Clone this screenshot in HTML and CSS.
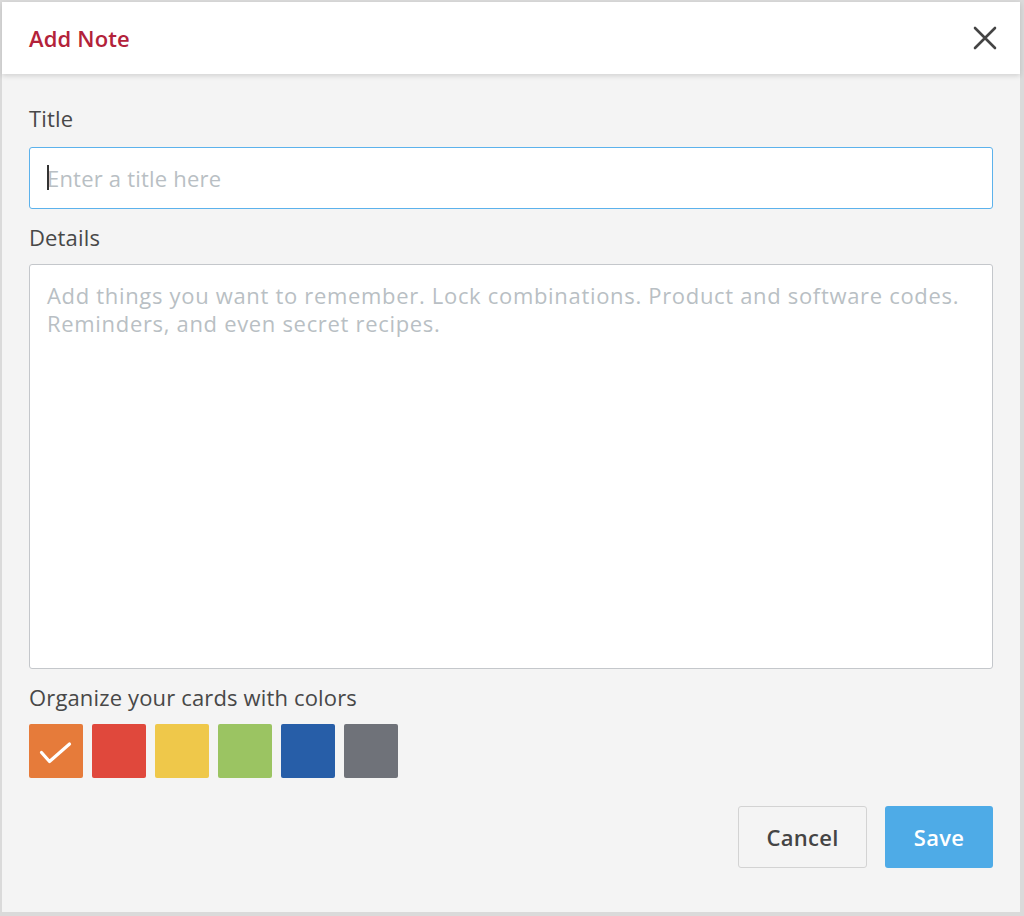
FILE: index.html
```html
<!DOCTYPE html>
<html lang="en">
<head>
<meta charset="utf-8">
<title>Add Note</title>
<link rel="stylesheet" href="styles.css">
</head>
<body>
<div class="modal">
  <header class="modal-header">
    <h1 class="modal-title">Add Note</h1>
    <button class="close-btn" aria-label="Close">
      <svg width="24" height="24" viewBox="0 0 24 24"><path d="M2 2 L22 22 M22 2 L2 22" stroke="#444" stroke-width="2.6" stroke-linecap="round" fill="none"/></svg>
    </button>
  </header>
  <div class="modal-body">
    <label class="field-label" for="title">Title</label>
    <div class="input-wrap">
      <input id="title" class="text-input" type="text" placeholder="Enter a title here">
      <span class="caret"></span>
    </div>
    <label class="field-label" for="details">Details</label>
    <textarea id="details" class="text-area" placeholder="Add things you want to remember. Lock combinations. Product and software codes. Reminders, and even secret recipes."></textarea>
    <div class="field-label">Organize your cards with colors</div>
    <div class="swatches">
      <div class="swatch orange selected">
        <svg width="54" height="54" viewBox="0 0 54 54"><path d="M12.5 28.5 L20.5 37.5 L40.5 20" stroke="#fff" stroke-width="3.2" stroke-linecap="round" stroke-linejoin="round" fill="none"/></svg>
      </div>
      <div class="swatch red"></div>
      <div class="swatch yellow"></div>
      <div class="swatch green"></div>
      <div class="swatch blue"></div>
      <div class="swatch gray"></div>
    </div>
    <div class="actions">
      <button class="btn btn-cancel">Cancel</button>
      <button class="btn btn-save">Save</button>
    </div>
  </div>
</div>
</body>
</html>
```

FILE: styles.css
```css
html, body {
  margin: 0;
  padding: 0;
}
body {
  background: #dadada;
  font-family: "Open Sans", "Noto Sans", sans-serif;
  width: 1024px;
  height: 916px;
  overflow: hidden;
}
.modal {
  margin: 2px 4px 0 2px;
  height: 910px;
  background: #f4f4f4;
  display: flex;
  flex-direction: column;
}
.modal-header {
  position: relative;
  z-index: 1;
  height: 72px;
  background: #fff;
  display: flex;
  align-items: center;
  justify-content: space-between;
  padding: 0 23px 0 27px;
  box-shadow: 0 2px 5px rgba(0, 0, 0, 0.14);
}
.modal-title {
  margin: 0;
  font-size: 22px;
  letter-spacing: 0.15px;
  font-weight: 600;
  color: #b3223a;
}
.close-btn {
  background: none;
  border: 0;
  padding: 0;
  width: 24px;
  height: 24px;
  cursor: pointer;
  display: flex;
}
.modal-body {
  padding: 30px 27px 0 27px;
  display: flex;
  flex-direction: column;
}
.field-label {
  display: block;
  font-size: 22px;
  letter-spacing: 0.15px;
  line-height: 28px;
  color: #484848;
}
.input-wrap {
  position: relative;
  margin-top: 15px;
  margin-bottom: 14px;
}
.text-input {
  box-sizing: border-box;
  width: 100%;
  height: 62px;
  border: 1.5px solid #5cb2ec;
  border-radius: 3px;
  background: #fff;
  padding: 0 17px;
  font-family: inherit;
  font-size: 22px;
  letter-spacing: 0.2px;
  color: #444;
  outline: none;
}
.text-input::placeholder,
.text-area::placeholder {
  color: #b9bfc4;
}
.caret {
  position: absolute;
  left: 18px;
  top: 18px;
  width: 1.5px;
  height: 25px;
  background: #333;
}
.text-area {
  box-sizing: border-box;
  width: 100%;
  height: 405px;
  margin-top: 13px;
  margin-bottom: 14px;
  border: 1.5px solid #c4c7cb;
  border-radius: 3px;
  background: #fff;
  padding: 16px 17px;
  font-family: inherit;
  font-size: 22px;
  letter-spacing: 0.68px;
  line-height: 28px;
  color: #444;
  resize: none;
  outline: none;
  display: block;
}
.swatches {
  display: flex;
  gap: 9px;
  margin-top: 13px;
}
.swatch {
  width: 54px;
  height: 54px;
  border-radius: 2px;
  display: flex;
}
.orange { background: #e67b3a; }
.red { background: #e0483c; }
.yellow { background: #efc84a; }
.green { background: #9bc462; }
.blue { background: #275ea8; }
.gray { background: #6f7279; }
.actions {
  display: flex;
  justify-content: flex-end;
  gap: 18px;
  margin-top: 28px;
}
.btn {
  box-sizing: border-box;
  height: 62px;
  border-radius: 3px;
  font-family: inherit;
  font-size: 22px;
  letter-spacing: 0.3px;
  font-weight: 600;
  cursor: pointer;
}
.btn-cancel {
  width: 129px;
  background: #f4f4f4;
  border: 1.5px solid #d3d3d3;
  color: #444;
}
.btn-save {
  width: 108px;
  background: #4eabe7;
  border: 0;
  color: #fff;
}
```
